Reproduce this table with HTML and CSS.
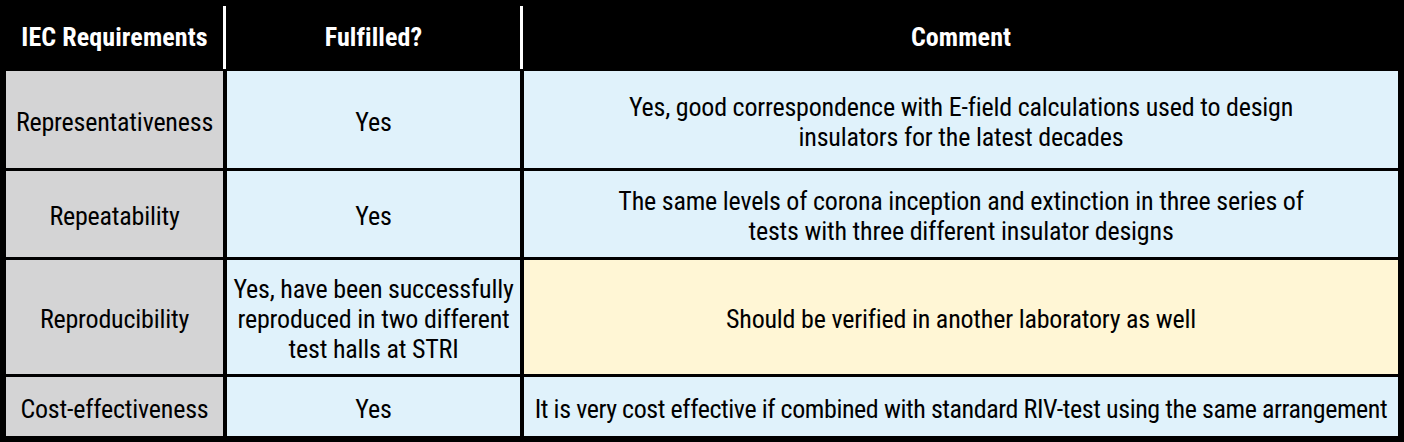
FILE: index.html
```html
<!DOCTYPE html>
<html lang="en">
<head>
<meta charset="utf-8">
<title>IEC Requirements</title>
<link rel="stylesheet" href="styles.css">
</head>
<body>
<div class="table">
  <div class="hcell">IEC Requirements</div>
  <div class="hcell sep">Fulfilled?</div>
  <div class="hcell sep">Comment</div>

  <div class="cell req">Representativeness</div>
  <div class="cell blue">Yes</div>
  <div class="cell blue">Yes, good correspondence with E-field calculations used to design<br>insulators for the latest decades</div>

  <div class="cell req">Repeatability</div>
  <div class="cell blue">Yes</div>
  <div class="cell blue">The same levels of corona inception and extinction in three series of<br>tests with three different insulator designs</div>

  <div class="cell req">Reproducibility</div>
  <div class="cell blue">Yes, have been successfully<br>reproduced in two different<br>test halls at STRI</div>
  <div class="cell yellow">Should be verified in another laboratory as well</div>

  <div class="cell req">Cost-effectiveness</div>
  <div class="cell blue">Yes</div>
  <div class="cell blue tight">It is very cost effective if combined with standard RIV-test using the same arrangement</div>
</div>
</body>
</html>
```

FILE: styles.css
```css
html, body {
  margin: 0;
  padding: 0;
  background: #000;
}
body {
  width: 1404px;
  height: 442px;
  overflow: hidden;
  font-family: Roboto, "Liberation Sans", sans-serif;
  font-stretch: condensed;
}
.table {
  display: grid;
  grid-template-columns: 217px 293px 874px;
  grid-template-rows: 68px 97px 86px 114px 59px;
  column-gap: 4px;
  row-gap: 3px;
  padding: 0 6px 6px 6px;
}
.hcell {
  color: #fff;
  font-weight: bold;
  font-size: 26px;
  letter-spacing: 0.1px;
  display: flex;
  align-items: center;
  justify-content: center;
  align-self: start;
  margin-top: 6px;
  height: 63px;
  box-sizing: border-box;
  padding-bottom: 1px;
  white-space: nowrap;
}
.hcell.sep {
  margin-left: -4px;
  border-left: 3px solid #fff;
  padding-left: 1px;
}
.cell {
  display: flex;
  align-items: center;
  justify-content: center;
  text-align: center;
  font-size: 26px;
  line-height: 30px;
  letter-spacing: -0.2px;
  color: #000;
  white-space: nowrap;
  box-sizing: border-box;
  padding-top: 4px;
}
.cell.tight { letter-spacing: -0.42px; }
.req { background: #d4d4d5; }
.blue { background: #e0f2fb; }
.yellow { background: #fff6d5; }
```
